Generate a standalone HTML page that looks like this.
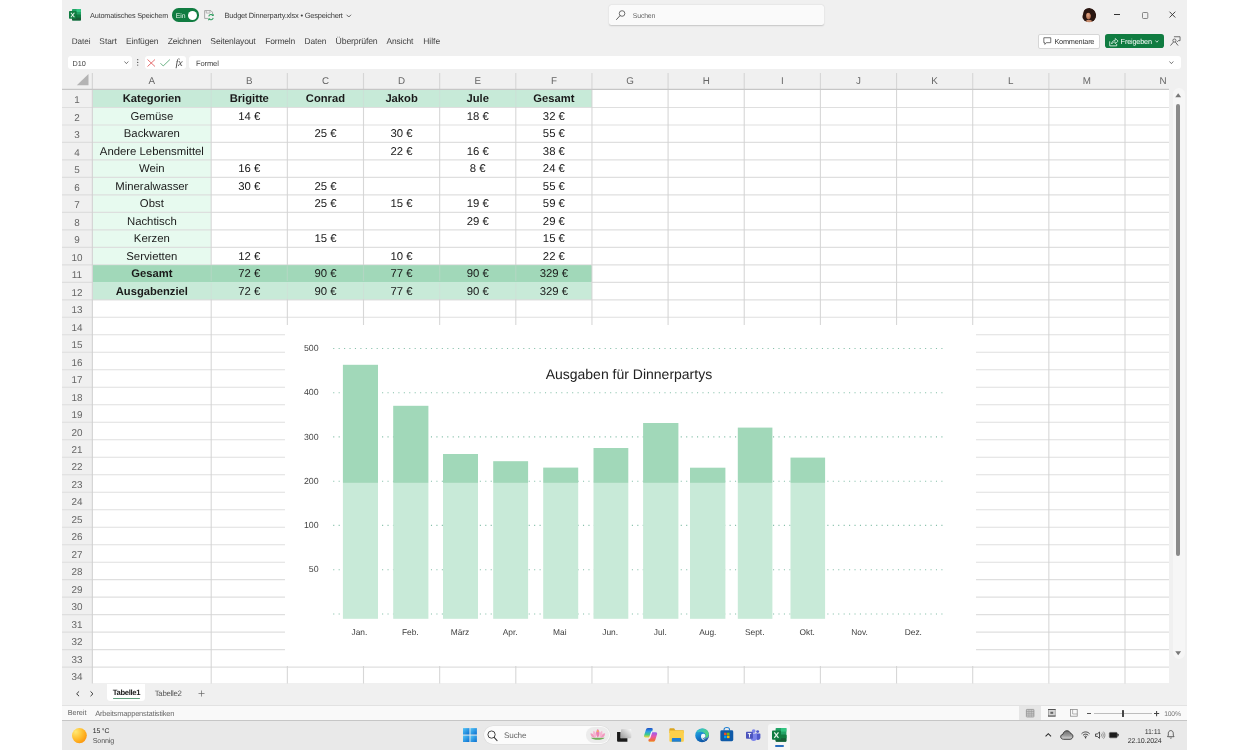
<!DOCTYPE html>
<html lang="de"><head><meta charset="utf-8"><title>Budget Dinnerparty.xlsx - Excel</title>
<style>
html,body{margin:0;padding:0}
body{text-rendering:geometricPrecision;-webkit-font-smoothing:antialiased;width:1250px;height:750px;position:relative;overflow:hidden;background:#fff;font-family:"Liberation Sans",sans-serif;}
.t{position:absolute;white-space:nowrap;overflow:visible}
.a{position:absolute}
svg{position:absolute;overflow:visible}
#r{position:absolute;left:0;top:0;width:1250px;height:750px;will-change:transform}
</style></head><body><div id="r">
<div class="a" style="left:62px;top:0;width:1125px;height:750px;background:#f0f0f0"></div>
<svg style="left:69px;top:9.1px" width="12" height="11.500" viewBox="0 0 24 23" preserveAspectRatio="none"><rect x="6" y="0" width="18" height="23" rx="1.400" fill="#21a366"/>
<rect x="15" y="0" width="9" height="6" fill="#33c481"/><rect x="6" y="5.800" width="9" height="5.800" fill="#107c41"/>
<rect x="6" y="11.500" width="18" height="11.500" rx="1.400" fill="#185c37"/><rect x="15" y="11.500" width="9" height="5.700" fill="#107c41"/>
<rect x="6" y="11.500" width="9" height="6" fill="#134f30"/>
<rect x="0" y="4.200" width="15" height="15.400" rx="1.400" fill="#107c41"/>
<path d="M3.800 7.400L10.800 16.400M10.800 7.400L3.800 16.400" stroke="#e4f4ea" stroke-width="2.100" fill="none"/></svg>
<div class="a" style="left:172px;top:8.4px;width:27px;height:13.200px;border-radius:6.600px;background:#107c41"></div>
<div class="a" style="left:188.3px;top:10.5px;width:9px;height:9px;border-radius:4.5px;background:#fff"></div>
<svg style="left:204.2px;top:9.6px" width="10" height="10.400" viewBox="0 0 20 21">
<path d="M1.200 1.200h12.500l3.300 3.300v12.500h-15.800z" fill="#f4f4f4" stroke="#8c8c8c" stroke-width="1.500"/>
<path d="M4.500 1.200v5h7.500v-5" fill="none" stroke="#9a9a9a" stroke-width="1.300"/>
<circle cx="14" cy="14.500" r="6.500" fill="#f0f0f0"/>
<path d="M9.500 13a4.800 4.800 0 0 1 8.600-1.800M18.500 16a4.800 4.800 0 0 1-8.600 1.800" fill="none" stroke="#2e9d5e" stroke-width="2.100"/>
<path d="M19.500 7.500v4.500h-4.500zM8.500 21.500v-4.500h4.500z" fill="#2e9d5e"/>
</svg>
<svg style="left:345.7px;top:13.6px" width="5.6" height="4" viewBox="0 0 11 8"><path d="M1 1.5L5.5 6 10 1.5" fill="none" stroke="#444" stroke-width="1.6"/></svg>
<div class="a" style="left:609px;top:5px;width:215.4px;height:20px;border-radius:2.5px;background:#fafafa;box-shadow:0 0.5px 1.5px rgba(0,0,0,.18)"></div>
<svg style="left:616.4px;top:10px" width="9.6" height="10" viewBox="0 0 19 20"><circle cx="12" cy="7" r="5.6" fill="none" stroke="#555" stroke-width="1.7"/><path d="M8 11.2L1 19" stroke="#555" stroke-width="1.9" stroke-linecap="round"/></svg>
<svg style="left:1081.8px;top:7.5px" width="14.4" height="14.4" viewBox="0 0 30 30">
<defs><clipPath id="av"><circle cx="15" cy="15" r="15"/></clipPath><radialGradient id="fc" cx="0.4" cy="0.4" r="0.7"><stop offset="0" stop-color="#e2a785"/><stop offset="1" stop-color="#a9674a"/></radialGradient></defs>
<g clip-path="url(#av)"><rect width="30" height="30" fill="#ebe4e0"/>
<path d="M8 1C16-2 27 2 29 12c1 7-1 13-6 17H5C1 25-1 20 2 14 3 8 4 3 8 1z" fill="#2a1712"/>
<path d="M9 26c2-2 8-2 11 0l2 4H7z" fill="#c58a6c"/>
<ellipse cx="13.500" cy="16" rx="5" ry="7.200" fill="url(#fc)"/>
<path d="M8 12c1-5 6-7 12-4 1 3 1 7 0 10-1-4-3-7-6-8-2 0-4 1-6 2z" fill="#2a1712"/></g></svg>
<div class="a" style="left:1113.8px;top:14px;width:5.8px;height:1px;background:#333"></div>
<svg style="left:1141.8px;top:11.5px" width="6.4" height="7" viewBox="0 0 6.4 7"><rect x="0.5" y="0.5" width="5.3" height="6" rx="0.9" fill="none" stroke="#6a6a6a" stroke-width="0.8"/></svg>
<svg style="left:1169.3px;top:11.4px" width="6.8" height="7.2" viewBox="0 0 14 14"><path d="M1 1L13 13M13 1L1 13" stroke="#2a2a2a" stroke-width="1.8"/></svg>
<div class="a" style="left:1038.2px;top:34.1px;width:59.6px;height:13px;border:0.8px solid #d6d6d6;border-radius:2px;background:#fff"></div>
<svg style="left:1043.4px;top:37.2px" width="8.6" height="8.4" viewBox="0 0 17 17"><path d="M1.5 1.5h14v10h-9l-3 3.5v-3.5h-2z" fill="none" stroke="#444" stroke-width="1.5" stroke-linejoin="round"/></svg>
<div class="a" style="left:1104.5px;top:33.9px;width:59px;height:14.500px;border-radius:2.800px;background:#107c41"></div>
<svg style="left:1108.7px;top:36.6px" width="9.6" height="9.6" viewBox="0 0 20 20"><path d="M1.500 9v9.500h14.500v-4" fill="none" stroke="#e8f6ee" stroke-width="1.700"/><path d="M5.500 14.500c0-4.500 3-7.500 7.500-7.500v-4l6 5.500-6 5.500v-3.800c-3.500 0-5.500 1-7.500 4.300z" fill="none" stroke="#e8f6ee" stroke-width="1.500" stroke-linejoin="round"/></svg>
<svg style="left:1154.6px;top:40px" width="3.8" height="3" viewBox="0 0 8 6"><path d="M1 1l3 3.5L7 1" fill="none" stroke="#fff" stroke-width="1.5"/></svg>
<svg style="left:1170px;top:35.8px" width="10.8" height="9.8" viewBox="0 0 22 20"><path d="M8 1.500h12.500v8h-3.500l-2.500 2.500" fill="none" stroke="#444" stroke-width="1.500" stroke-linejoin="round"/><circle cx="9" cy="9.300" r="3.200" fill="#f0f0f0" stroke="#444" stroke-width="1.500"/><path d="M1 19.500l6.300-7.500M16.500 19.500l-5.800-7.500" fill="none" stroke="#444" stroke-width="1.600"/></svg>
<div class="a" style="left:68.3px;top:55.7px;width:63.4px;height:13.700px;border-radius:3px;background:#fff"></div>
<svg style="left:124px;top:60.8px" width="4.8" height="3.4" viewBox="0 0 10 7"><path d="M1 1l4 4.5L9 1" fill="none" stroke="#444" stroke-width="1.5"/></svg>
<svg style="left:137.4px;top:59.4px" width="1.4" height="6.8" viewBox="0 0 2 10"><circle cx="1" cy="1" r="1" fill="#555"/><circle cx="1" cy="5" r="1" fill="#555"/><circle cx="1" cy="9" r="1" fill="#555"/></svg>
<div class="a" style="left:144.5px;top:55.7px;width:41.5px;height:13.700px;border-radius:3px;background:#fff"></div>
<svg style="left:147.2px;top:58.8px" width="8.5" height="8" viewBox="0 0 17 16"><path d="M1 1L16 15M16 1L1 15" stroke="#e0585a" stroke-width="1.7"/></svg>
<svg style="left:160px;top:59px" width="10.4" height="7.5" viewBox="0 0 21 15"><path d="M1 8.5L6.5 14 20 1" fill="none" stroke="#4ea36d" stroke-width="1.7"/></svg>
<div class="a" style="left:188.8px;top:55.7px;width:992.2px;height:13.700px;border-radius:3px;background:#fff"></div>
<svg style="left:1169.2px;top:60.8px" width="4.8" height="3.4" viewBox="0 0 10 7"><path d="M1 1l4 4.5L9 1" fill="none" stroke="#444" stroke-width="1.5"/></svg>
<div class="a" style="left:92.5px;top:89.95px;width:1076.5px;height:593.55px;background:#fff;overflow:hidden"></div>
<div class="a" style="left:92.50px;top:89.95px;width:499.45px;height:17.49px;background:#c7ead8"></div>
<div class="a" style="left:92.50px;top:107.44px;width:118.70px;height:157.41px;background:#e7faef"></div>
<div class="a" style="left:92.50px;top:264.85px;width:499.45px;height:17.49px;background:#a1d8b9"></div>
<div class="a" style="left:92.50px;top:282.34px;width:499.45px;height:17.49px;background:#c8ead8"></div>
<svg style="left:0;top:0" width="1250" height="750" viewBox="0 0 1250 750">
<g stroke="#dbdbdb" stroke-opacity="0.9" stroke-width="1.1" fill="none">
<path d="M62 107.44H1169"/>
<path d="M62 124.93H1169"/>
<path d="M62 142.42H1169"/>
<path d="M62 159.91H1169"/>
<path d="M62 177.40H1169"/>
<path d="M62 194.89H1169"/>
<path d="M62 212.38H1169"/>
<path d="M62 229.87H1169"/>
<path d="M62 247.36H1169"/>
<path d="M62 264.85H1169"/>
<path d="M62 282.34H1169"/>
<path d="M62 299.83H1169"/>
<path d="M62 317.32H1169"/>
<path d="M62 334.81H1169"/>
<path d="M62 352.30H1169"/>
<path d="M62 369.79H1169"/>
<path d="M62 387.28H1169"/>
<path d="M62 404.77H1169"/>
<path d="M62 422.26H1169"/>
<path d="M62 439.75H1169"/>
<path d="M62 457.24H1169"/>
<path d="M62 474.73H1169"/>
<path d="M62 492.22H1169"/>
<path d="M62 509.71H1169"/>
<path d="M62 527.20H1169"/>
<path d="M62 544.69H1169"/>
<path d="M62 562.18H1169"/>
<path d="M62 579.67H1169"/>
<path d="M62 597.16H1169"/>
<path d="M62 614.65H1169"/>
<path d="M62 632.14H1169"/>
<path d="M62 649.63H1169"/>
<path d="M62 667.12H1169"/>
<path d="M211.20 73V683.5" stroke="#d3d3d3"/>
<path d="M287.35 73V683.5" stroke="#d3d3d3"/>
<path d="M363.50 73V683.5" stroke="#d3d3d3"/>
<path d="M439.65 73V683.5" stroke="#d3d3d3"/>
<path d="M515.80 73V683.5" stroke="#d3d3d3"/>
<path d="M591.95 73V683.5" stroke="#d3d3d3"/>
<path d="M668.10 73V683.5" stroke="#d3d3d3"/>
<path d="M744.25 73V683.5" stroke="#d3d3d3"/>
<path d="M820.40 73V683.5" stroke="#d3d3d3"/>
<path d="M896.55 73V683.5" stroke="#d3d3d3"/>
<path d="M972.70 73V683.5" stroke="#d3d3d3"/>
<path d="M1048.85 73V683.5" stroke="#d3d3d3"/>
<path d="M1125.00 73V683.5" stroke="#d3d3d3"/>
</g>
<path d="M92.3 73V683.5" stroke="#d0d0d0" stroke-width="1" fill="none"/>
<path d="M62 89.4H1169" stroke="#c6c6c6" stroke-width="1.1" fill="none"/>
<path d="M76.8 85.2H88.5V74z" fill="#b4b4b4"/>
</svg>
<div class="a" style="left:93.10px;top:90.45px;width:498.35px;height:16.39px;background:#c7ead8;opacity:0.6"></div>
<div class="a" style="left:93.10px;top:265.45px;width:498.35px;height:16.89px;background:#a1d8b9;opacity:0.62"></div>
<div class="a" style="left:93.10px;top:282.34px;width:498.35px;height:16.89px;background:#c8ead8;opacity:0.62"></div>
<div class="a" style="left:93.10px;top:281.44px;width:498.35px;height:0.90px;background:#a1d8b9;opacity:0.9"></div>
<div class="a" style="left:93.10px;top:282.34px;width:498.35px;height:0.90px;background:#c8ead8;opacity:0.9"></div>
<div class="a" style="left:1169px;top:71px;width:18px;height:613.5px;background:#f0f0f0"></div>
<div class="a" style="left:1172.5px;top:88px;width:12px;height:571px;border-radius:6px;background:#f6f6f6"></div>
<div class="a" style="left:1176.2px;top:104px;width:4px;height:451.5px;border-radius:2px;background:#8a8a8a"></div>
<svg style="left:1175.4px;top:92.5px" width="6.4" height="4.6" viewBox="0 0 13 9"><path d="M6.5 0.5L12.5 8.5H0.5z" fill="#777"/></svg>
<svg style="left:1175.4px;top:651.4px" width="6.4" height="4.6" viewBox="0 0 13 9"><path d="M6.5 8.5L12.5 0.5H0.5z" fill="#777"/></svg>
<div class="a" style="left:284.6px;top:325.4px;width:691.4px;height:340.20000000000005px;background:#fff"></div>
<svg style="left:0;top:0" width="1250" height="750" viewBox="0 0 1250 750" font-family="Liberation Sans, sans-serif">
<path d="M333.2 348.5H942.6" stroke="#86c0aa" stroke-width="1.1" stroke-dasharray="1.1 4.33" fill="none"/>
<path d="M333.2 392.7H942.6" stroke="#86c0aa" stroke-width="1.1" stroke-dasharray="1.1 4.33" fill="none"/>
<path d="M333.2 436.9H942.6" stroke="#86c0aa" stroke-width="1.1" stroke-dasharray="1.1 4.33" fill="none"/>
<path d="M333.2 481.3H942.6" stroke="#86c0aa" stroke-width="1.1" stroke-dasharray="1.1 4.33" fill="none"/>
<path d="M333.2 525.4H942.6" stroke="#86c0aa" stroke-width="1.1" stroke-dasharray="1.1 4.33" fill="none"/>
<path d="M333.2 569.8H942.6" stroke="#86c0aa" stroke-width="1.1" stroke-dasharray="1.1 4.33" fill="none"/>
<path d="M333.2 614.0H942.6" stroke="#86c0aa" stroke-width="1.1" stroke-dasharray="1.1 4.33" fill="none"/>
<rect x="342.9" y="482.9" width="35.1" height="135.9" fill="#c8ead8"/>
<rect x="342.9" y="364.8" width="35.1" height="118.1" fill="#a1d8b9"/>
<rect x="393.2" y="482.9" width="35.2" height="135.9" fill="#c8ead8"/>
<rect x="393.2" y="405.8" width="35.2" height="77.1" fill="#a1d8b9"/>
<rect x="443.0" y="482.9" width="35.0" height="135.9" fill="#c8ead8"/>
<rect x="443.0" y="454.0" width="35.0" height="28.9" fill="#a1d8b9"/>
<rect x="493.2" y="482.9" width="34.9" height="135.9" fill="#c8ead8"/>
<rect x="493.2" y="461.2" width="34.9" height="21.7" fill="#a1d8b9"/>
<rect x="543.2" y="482.9" width="35.0" height="135.9" fill="#c8ead8"/>
<rect x="543.2" y="467.6" width="35.0" height="15.3" fill="#a1d8b9"/>
<rect x="593.5" y="482.9" width="34.8" height="135.9" fill="#c8ead8"/>
<rect x="593.5" y="448.0" width="34.8" height="34.9" fill="#a1d8b9"/>
<rect x="643.1" y="482.9" width="35.3" height="135.9" fill="#c8ead8"/>
<rect x="643.1" y="423.0" width="35.3" height="59.9" fill="#a1d8b9"/>
<rect x="690.0" y="482.9" width="35.4" height="135.9" fill="#c8ead8"/>
<rect x="690.0" y="467.7" width="35.4" height="15.2" fill="#a1d8b9"/>
<rect x="737.8" y="482.9" width="34.6" height="135.9" fill="#c8ead8"/>
<rect x="737.8" y="427.6" width="34.6" height="55.3" fill="#a1d8b9"/>
<rect x="790.5" y="482.9" width="34.6" height="135.9" fill="#c8ead8"/>
<rect x="790.5" y="457.6" width="34.6" height="25.3" fill="#a1d8b9"/>
<text x="318.6" y="351.1" font-size="8.8" fill="#444" text-anchor="end">500</text>
<text x="318.6" y="395.3" font-size="8.8" fill="#444" text-anchor="end">400</text>
<text x="318.6" y="439.5" font-size="8.8" fill="#444" text-anchor="end">300</text>
<text x="318.6" y="483.9" font-size="8.8" fill="#444" text-anchor="end">200</text>
<text x="318.6" y="528.0" font-size="8.8" fill="#444" text-anchor="end">100</text>
<text x="318.6" y="572.4" font-size="8.8" fill="#444" text-anchor="end">50</text>
<text x="359.4" y="635.2" font-size="8.4" fill="#3c3c3c" text-anchor="middle">Jan.</text>
<text x="410.3" y="635.2" font-size="8.4" fill="#3c3c3c" text-anchor="middle">Feb.</text>
<text x="460.0" y="635.2" font-size="8.4" fill="#3c3c3c" text-anchor="middle">März</text>
<text x="510.1" y="635.2" font-size="8.4" fill="#3c3c3c" text-anchor="middle">Apr.</text>
<text x="559.8" y="635.2" font-size="8.4" fill="#3c3c3c" text-anchor="middle">Mai</text>
<text x="610.2" y="635.2" font-size="8.4" fill="#3c3c3c" text-anchor="middle">Jun.</text>
<text x="660.3" y="635.2" font-size="8.4" fill="#3c3c3c" text-anchor="middle">Jul.</text>
<text x="707.8" y="635.2" font-size="8.4" fill="#3c3c3c" text-anchor="middle">Aug.</text>
<text x="754.7" y="635.2" font-size="8.4" fill="#3c3c3c" text-anchor="middle">Sept.</text>
<text x="807.2" y="635.2" font-size="8.4" fill="#3c3c3c" text-anchor="middle">Okt.</text>
<text x="859.6" y="635.2" font-size="8.4" fill="#3c3c3c" text-anchor="middle">Nov.</text>
<text x="913.3" y="635.2" font-size="8.4" fill="#3c3c3c" text-anchor="middle">Dez.</text>
<text x="628.9" y="378.8" font-size="14" fill="#222" text-anchor="middle">Ausgaben für Dinnerpartys</text>
</svg>
<div class="a" style="left:62px;top:683.5px;width:1125px;height:21.5px;background:#f0f0f0"></div>
<svg style="left:75.5px;top:690.9px" width="3.6" height="5.6" viewBox="0 0 7 11"><path d="M6 0.8L1.2 5.5 6 10.2" fill="none" stroke="#333" stroke-width="1.9"/></svg>
<svg style="left:90.4px;top:690.9px" width="3.6" height="5.6" viewBox="0 0 7 11"><path d="M1 0.8L5.8 5.5 1 10.2" fill="none" stroke="#333" stroke-width="1.9"/></svg>
<div class="a" style="left:107px;top:683.5px;width:38px;height:17.6px;border-radius:0 0 3.5px 3.5px;background:#fff"></div>
<div class="a" style="left:113px;top:697.5px;width:27px;height:1.8px;background:#5f9e7c;border-radius:1px"></div>
<svg style="left:197.5px;top:689.6px" width="7" height="7" viewBox="0 0 14 14"><path d="M7 1V13M1 7H13" stroke="#666" stroke-width="1.4"/></svg>
<div class="a" style="left:62px;top:704.8px;width:1125px;height:15.4px;background:#f9f9f9;border-top:1px solid #e2e2e2;box-sizing:border-box"></div>
<div class="a" style="left:1019px;top:706px;width:22px;height:14px;background:#e6e6e6"></div>
<svg style="left:1025.7px;top:708.6px" width="8.300" height="8.400" viewBox="0 0 16 16"><rect x="0.700" y="0.700" width="14.600" height="14.600" rx="1" fill="#d4d4d4" stroke="#8a8a8a" stroke-width="1.400"/><path d="M0.700 4.400H15.300M0.700 8H15.300M0.700 11.600H15.300" stroke="#8a8a8a" stroke-width="1.300"/><path d="M5.600 0.700V15.300M10.400 0.700V15.300" stroke="#9a9a9a" stroke-width="1"/></svg>
<svg style="left:1048.2px;top:708.8px" width="7.6" height="7.6" viewBox="0 0 16 16"><rect x="0.800" y="0.800" width="14.400" height="14.400" fill="#d6d6d6" stroke="#8a8a8a" stroke-width="1.400"/><path d="M0 1.200H16M0 14.800H16" stroke="#555" stroke-width="2.200"/><rect x="5" y="5.800" width="6" height="4.400" fill="#666"/></svg>
<svg style="left:1070.2px;top:708.8px" width="7.6" height="7.6" viewBox="0 0 16 16"><rect x="0.8" y="0.8" width="14.4" height="14.4" fill="none" stroke="#888" stroke-width="1.6"/><path d="M5.5 0.8V10.5H15.2" fill="none" stroke="#888" stroke-width="1.3"/></svg>
<div class="a" style="left:1086.8px;top:712.9px;width:4.400px;height:1.400px;background:#555"></div>
<div class="a" style="left:1093.5px;top:713px;width:58.3px;height:0.9px;background:#bdbdbd"></div>
<div class="a" style="left:1121.6px;top:709.8px;width:2.4px;height:7.2px;background:#444;border-radius:0.6px"></div>
<svg style="left:1154px;top:710.8px" width="5.2" height="5.2" viewBox="0 0 10 10"><path d="M5 0V10M0 5H10" stroke="#444" stroke-width="2"/></svg>
<div class="a" style="left:62px;top:719.9px;width:1125px;height:30.1px;background:#e9e9e9;border-top:1px solid #c6c6c6;box-sizing:border-box"></div>
<svg style="left:72px;top:727.8px" width="14.8" height="15.2" viewBox="0 0 30 30" preserveAspectRatio="none"><defs><radialGradient id="sun" cx="0.25" cy="0.25" r="0.95"><stop offset="0" stop-color="#ffe873"/><stop offset="0.5" stop-color="#ffbe2e"/><stop offset="1" stop-color="#fb8c04"/></radialGradient></defs><circle cx="15" cy="15" r="15" fill="url(#sun)"/></svg>
<svg style="left:462.5px;top:728.1px" width="13.9" height="14.1" viewBox="0 0 28 28"><defs><linearGradient id="wg" x1="0" y1="0" x2="1" y2="1"><stop offset="0" stop-color="#54c5f8"/><stop offset="1" stop-color="#0a6fd0"/></linearGradient></defs>
<rect x="0" y="0" width="13" height="13" fill="url(#wg)"/><rect x="15" y="0" width="13" height="13" fill="url(#wg)"/><rect x="0" y="15" width="13" height="13" fill="url(#wg)"/><rect x="15" y="15" width="13" height="13" fill="url(#wg)"/></svg>
<div class="a" style="left:483.6px;top:726.2px;width:126.4px;height:18px;border-radius:9px;background:#fbfbfb;box-shadow:0 0 0 0.6px #dcdcdc"></div>
<svg style="left:486.8px;top:730px" width="10.6" height="11.2" viewBox="0 0 21 22"><circle cx="9" cy="9" r="7.2" fill="none" stroke="#333" stroke-width="1.8"/><path d="M14.2 14.6L20 21" stroke="#333" stroke-width="2" stroke-linecap="round"/></svg>
<div class="a" style="left:585.7px;top:727.4px;width:23.4px;height:15.6px;border-radius:7.8px;background:#ececec"></div>
<svg style="left:590px;top:729.2px" width="15.6" height="10.8" viewBox="0 0 31 21">
<path d="M2 17h27c-2 3-8 4-13.5 4S4 20 2 17z" fill="#6fae5a"/>
<path d="M1 8c4 0 8 3 9 9-5 0-9-3-9-9z" fill="#f29ac0"/><path d="M30 8c-4 0-8 3-9 9 5 0 9-3 9-9z" fill="#f29ac0"/>
<path d="M7 3c4 2 6 7 5 14-5-2-7-8-5-14z" fill="#f7b3d0"/><path d="M24 3c-4 2-6 7-5 14 5-2 7-8 5-14z" fill="#f7b3d0"/>
<path d="M15.5 0c4 4 5 11 0 17-5-6-4-13 0-17z" fill="#ee7fb0"/><circle cx="15.5" cy="4" r="1.6" fill="#f9c440"/></svg>
<svg style="left:617.2px;top:728.6px" width="14.4" height="12.8" viewBox="0 0 29 26"><defs><linearGradient id="tv" x1="0" y1="1" x2="1" y2="0"><stop offset="0" stop-color="#9a9a9a"/><stop offset="1" stop-color="#fdfdfd"/></linearGradient></defs>
<rect x="8" y="0" width="21" height="19" rx="2" fill="url(#tv)"/><path d="M0 6h7v13h14v7H2a2 2 0 0 1-2-2z" fill="#1b1b1b"/></svg>
<svg style="left:643.6px;top:727.8px" width="13.2" height="13.8" viewBox="0 0 26 27"><defs>
<linearGradient id="cp1" x1="0" y1="0" x2="0" y2="1"><stop offset="0" stop-color="#1a4fc4"/><stop offset="0.35" stop-color="#2e9ce8"/><stop offset="0.68" stop-color="#3cc98e"/><stop offset="1" stop-color="#efd93a"/></linearGradient>
<linearGradient id="cp2" x1="0" y1="1" x2="0" y2="0"><stop offset="0" stop-color="#9a5cf0"/><stop offset="0.45" stop-color="#e957a8"/><stop offset="0.85" stop-color="#f26b3a"/><stop offset="1" stop-color="#eaa030"/></linearGradient></defs>
<path id="cpl" d="M7.500 0h7c2.200 0 3.300 1.400 2.600 3.500l-3.600 11.500c-.7 2.200-2.200 3.500-4.500 3.500H3c-2.300 0-3.500-1.600-2.800-3.800l3.400-10.700C4.300 1.400 5.500 0 7.500 0z" fill="url(#cp1)"/>
<path d="M7.500 0h7c2.200 0 3.300 1.400 2.600 3.500l-3.600 11.500c-.7 2.200-2.200 3.500-4.500 3.500H3c-2.300 0-3.500-1.600-2.800-3.800l3.400-10.700C4.300 1.400 5.500 0 7.500 0z" fill="url(#cp2)" transform="rotate(180 13 13.500)"/>
<path d="M15.200 7.500l-4.200 12.500" stroke="#fff" stroke-opacity="0.92" stroke-width="2.400" stroke-linecap="round"/></svg>
<svg style="left:668.7px;top:728px" width="15.2" height="14" viewBox="0 0 30 28"><path d="M0.500 3C0.500 1.500 1.500 0.500 3 0.500h7l2.500 4h15c1.500 0 2 .8 2 2V10H0.500z" fill="#dba520"/>
<rect x="0.500" y="5" width="29" height="22.500" rx="1.800" fill="#fcd04a"/><path d="M5.500 27.500v-5.500c0-1.200.8-2 2-2h14.500c1.200 0 2 .8 2 2v5.500z" fill="#1f7fd4"/></svg>
<svg style="left:694.9px;top:727.5px" width="14.2" height="14.8" viewBox="0 0 29 30"><defs>
<linearGradient id="eg" x1="0.1" y1="0" x2="0.6" y2="1"><stop offset="0" stop-color="#2fb9d6"/><stop offset="0.5" stop-color="#1582d2"/><stop offset="1" stop-color="#0b4f9e"/></linearGradient>
<linearGradient id="eg2" x1="0" y1="0" x2="1" y2="0.6"><stop offset="0" stop-color="#2fb9d6"/><stop offset="1" stop-color="#54d67a"/></linearGradient></defs>
<circle cx="14.500" cy="15" r="14" fill="url(#eg)"/>
<path d="M4 7C8 1 17-1 23 3c5 3.500 7 10 3.500 15-1.500 2-4.500 3-7.500 2 3-1 4-4 2.500-7C19 9 14 7 9 8 7 8.300 5 9 4 7z" fill="url(#eg2)"/>
<path d="M13 13c2.500-2 6.500-1.500 8 1 1.500 3-.5 5.500-3.500 6 4 1.500 7.500.5 9.500-2-1 5-6 8-10 6.500-4-1.500-6-7-4-11.500z" fill="#f3f8fc"/>
<path d="M27 18c-3 4-9 4.500-12 1.500 1 4 5 6.500 9 5 2-1.500 3-4 3-6.500z" fill="#0b4f9e" fill-opacity="0.85"/></svg>
<svg style="left:720.4px;top:727px" width="13.6" height="14.4" viewBox="0 0 27 29"><path d="M8 7V5c0-2 1.500-4 5.500-4S19 3 19 5v2" fill="none" stroke="#1f7fd1" stroke-width="2.200"/>
<rect x="0.500" y="6.500" width="26" height="22" rx="3" fill="#0f5aa8"/>
<rect x="8" y="11.500" width="5" height="5" fill="#f25022"/><rect x="14" y="11.500" width="5" height="5" fill="#7fba00"/><rect x="8" y="17.500" width="5" height="5" fill="#00a4ef"/><rect x="14" y="17.500" width="5" height="5" fill="#ffb900"/></svg>
<svg style="left:746px;top:728.6px" width="14.4" height="12.2" viewBox="0 0 29 24"><circle cx="23.500" cy="5" r="3" fill="#5059c9"/><circle cx="15.500" cy="3.800" r="3.800" fill="#7b83eb"/>
<path d="M20 9h8c.6 0 1 .4 1 1v7c0 3-2 5-5 5s-4-2-4-5z" fill="#5059c9"/><path d="M9 9h13v9c0 4-3 6-6.500 6S9 22 9 18z" fill="#7b83eb"/>
<rect x="0" y="5.500" width="14" height="14" rx="1.500" fill="#4b53bc"/><path d="M3.500 9h7M7 9v8" stroke="#fff" stroke-width="1.900" fill="none"/></svg>
<div class="a" style="left:768px;top:724px;width:22.2px;height:26px;border-radius:3px 3px 0 0;background:#f6f6f6"></div>
<svg style="left:772px;top:727.8px" width="14.400" height="13.700" viewBox="0 0 24 23" preserveAspectRatio="none"><rect x="6" y="0" width="18" height="23" rx="1.400" fill="#21a366"/>
<rect x="15" y="0" width="9" height="6" fill="#33c481"/><rect x="6" y="5.800" width="9" height="5.800" fill="#107c41"/>
<rect x="6" y="11.500" width="18" height="11.500" rx="1.400" fill="#185c37"/><rect x="15" y="11.500" width="9" height="5.700" fill="#107c41"/>
<rect x="6" y="11.500" width="9" height="6" fill="#134f30"/>
<rect x="0" y="4.200" width="15" height="15.400" rx="1.400" fill="#107c41"/>
<path d="M3.800 7.400L10.800 16.400M10.800 7.400L3.800 16.400" stroke="#e4f4ea" stroke-width="2.100" fill="none"/></svg>
<div class="a" style="left:774.7px;top:745px;width:9.2px;height:1.8px;border-radius:1px;background:#2a6fc0"></div>
<svg style="left:1045px;top:733.1px" width="6.600" height="3.800" viewBox="0 0 14 8"><path d="M1.200 7L7 1.400 12.800 7" fill="none" stroke="#2a2a2a" stroke-width="2.300"/></svg>
<svg style="left:1060.2px;top:730px" width="13.600" height="10" viewBox="0 0 27 20"><defs><linearGradient id="cl" x1="0" y1="0" x2="0" y2="1"><stop offset="0" stop-color="#6e6e6e"/><stop offset="0.55" stop-color="#9a9a9a"/><stop offset="1" stop-color="#dcdcdc"/></linearGradient></defs>
<path d="M7 18.500C3.500 18.500 1.300 16.300 1.300 13.500c0-2.700 2-4.700 4.600-4.900C6.600 4.500 9.700 1.500 13.700 1.500c3.600 0 6.500 2.300 7.400 5.600 2.700.4 4.600 2.600 4.600 5.400 0 3.300-2.500 6-5.700 6z" fill="url(#cl)" stroke="#3a3a3a" stroke-width="2" stroke-linejoin="round"/></svg>
<svg style="left:1081.3px;top:730.8px" width="9.200" height="7.600" viewBox="0 0 18 15"><path d="M1 5.500C5.500 .6 12.500 .6 17 5.500M3.800 8.500C6.800 5.400 11.200 5.400 14.200 8.500M6.500 11.300c1.500-1.500 3.500-1.500 5 0" fill="none" stroke="#3a3a3a" stroke-width="1.900"/><circle cx="9" cy="13.300" r="1.400" fill="#2a2a2a"/></svg>
<svg style="left:1095px;top:730.8px" width="10" height="8.400" viewBox="0 0 20 17"><path d="M1 6h3.500L9 2v13L4.500 11H1z" fill="none" stroke="#333" stroke-width="1.700" stroke-linejoin="round"/><path d="M12 5.500c1.500 1.500 1.500 4.500 0 6M14.500 3.300c2.800 2.800 2.800 7.600 0 10.400M17 1.300c4 4 4 10.400 0 14.400" fill="none" stroke="#777" stroke-width="1.500"/></svg>
<svg style="left:1109.4px;top:732px" width="9.600" height="6.200" viewBox="0 0 19 12"><rect x="0.700" y="0.700" width="15.600" height="10.600" rx="2" fill="#1c1c1c" stroke="#555" stroke-width="1.400"/><rect x="17" y="3.500" width="2" height="5" rx="0.800" fill="#222"/></svg>
<svg style="left:1166.7px;top:730.3px" width="7.600" height="9.400" viewBox="0 0 15 19"><path d="M7.500 1.200c3 0 5 2.300 5 5.300v4l1.600 3H0.900l1.600-3v-4c0-3 2-5.300 5-5.300z" fill="none" stroke="#333" stroke-width="1.500" stroke-linejoin="round"/><path d="M5.500 15.500c.4 1.300 3.600 1.300 4 0" fill="none" stroke="#333" stroke-width="1.400"/></svg>
<svg style="left:0;top:0" width="1250" height="750" viewBox="0 0 1250 750" font-family="Liberation Sans, sans-serif">
<text x="90.11" y="18.07" font-size="7.32" fill="#3d3d3d" textLength="78.33" lengthAdjust="spacing" >Automatisches Speichern</text>
<text x="175.73" y="17.69" font-size="6.82" fill="#e6f6ec" textLength="9.88" lengthAdjust="spacing" >Ein</text>
<text x="224.50" y="18.13" font-size="7.48" fill="#3d3d3d" textLength="118.45" lengthAdjust="spacing" >Budget Dinnerparty.xlsx • Gespeichert</text>
<text x="632.72" y="18.03" font-size="6.94" fill="#666" textLength="22.69" lengthAdjust="spacing" >Suchen</text>
<text x="71.67" y="44.23" font-size="8.17" fill="#444" textLength="18.82" lengthAdjust="spacing" >Datei</text>
<text x="99.37" y="44.29" font-size="8.33" fill="#444" textLength="17.43" lengthAdjust="spacing" >Start</text>
<text x="126.06" y="44.34" font-size="8.48" fill="#444" textLength="32.45" lengthAdjust="spacing" >Einfügen</text>
<text x="167.66" y="44.35" font-size="8.5" fill="#444" textLength="33.85" lengthAdjust="spacing" >Zeichnen</text>
<text x="210.36" y="44.37" font-size="8.56" fill="#444" textLength="45.36" lengthAdjust="spacing" >Seitenlayout</text>
<text x="265.16" y="44.34" font-size="8.47" fill="#444" textLength="30.15" lengthAdjust="spacing" >Formeln</text>
<text x="304.56" y="44.30" font-size="8.38" fill="#444" textLength="21.94" lengthAdjust="spacing" >Daten</text>
<text x="335.55" y="44.44" font-size="8.75" fill="#444" textLength="42.18" lengthAdjust="spacing" >Überprüfen</text>
<text x="386.46" y="44.33" font-size="8.44" fill="#444" textLength="26.94" lengthAdjust="spacing" >Ansicht</text>
<text x="423.26" y="44.34" font-size="8.48" fill="#444" textLength="16.85" lengthAdjust="spacing" >Hilfe</text>
<text x="1054.41" y="44.28" font-size="7.34" fill="#333" textLength="40.03" lengthAdjust="spacing" >Kommentare</text>
<text x="1120.61" y="44.06" font-size="7.3" fill="#fff" textLength="31.43" lengthAdjust="spacing" >Freigeben</text>
<text x="72.51" y="65.56" font-size="7.29" fill="#444" textLength="13.23" lengthAdjust="spacing" >D10</text>
<text x="175.6" y="65.6" font-size="10.5" font-family="Liberation Serif, serif" font-style="italic" fill="#444" letter-spacing="-0.5">fx</text>
<text x="196.00" y="65.67" font-size="7.6" fill="#444" textLength="22.86" lengthAdjust="spacing" >Formel</text>
<text x="151.85" y="84.37" font-size="9.8" fill="#666" text-anchor="middle" >A</text>
<text x="249.28" y="84.37" font-size="9.8" fill="#666" text-anchor="middle" >B</text>
<text x="325.43" y="84.37" font-size="9.8" fill="#666" text-anchor="middle" >C</text>
<text x="401.57" y="84.37" font-size="9.8" fill="#666" text-anchor="middle" >D</text>
<text x="477.72" y="84.37" font-size="9.8" fill="#666" text-anchor="middle" >E</text>
<text x="553.88" y="84.37" font-size="9.8" fill="#666" text-anchor="middle" >F</text>
<text x="630.03" y="84.37" font-size="9.8" fill="#666" text-anchor="middle" >G</text>
<text x="706.17" y="84.37" font-size="9.8" fill="#666" text-anchor="middle" >H</text>
<text x="782.33" y="84.37" font-size="9.8" fill="#666" text-anchor="middle" >I</text>
<text x="858.48" y="84.37" font-size="9.8" fill="#666" text-anchor="middle" >J</text>
<text x="934.62" y="84.37" font-size="9.8" fill="#666" text-anchor="middle" >K</text>
<text x="1010.78" y="84.37" font-size="9.8" fill="#666" text-anchor="middle" >L</text>
<text x="1086.93" y="84.37" font-size="9.8" fill="#666" text-anchor="middle" >M</text>
<text x="1163.08" y="84.37" font-size="9.8" fill="#666" text-anchor="middle" >N</text>
<text x="76.90" y="103.20" font-size="9.9" fill="#666" text-anchor="middle" >1</text>
<text x="76.90" y="120.69" font-size="9.9" fill="#666" text-anchor="middle" >2</text>
<text x="76.90" y="138.18" font-size="9.9" fill="#666" text-anchor="middle" >3</text>
<text x="76.90" y="155.67" font-size="9.9" fill="#666" text-anchor="middle" >4</text>
<text x="76.90" y="173.16" font-size="9.9" fill="#666" text-anchor="middle" >5</text>
<text x="76.90" y="190.65" font-size="9.9" fill="#666" text-anchor="middle" >6</text>
<text x="76.90" y="208.14" font-size="9.9" fill="#666" text-anchor="middle" >7</text>
<text x="76.90" y="225.63" font-size="9.9" fill="#666" text-anchor="middle" >8</text>
<text x="76.90" y="243.12" font-size="9.9" fill="#666" text-anchor="middle" >9</text>
<text x="76.90" y="260.61" font-size="9.9" fill="#666" text-anchor="middle" >10</text>
<text x="76.90" y="278.10" font-size="9.9" fill="#666" text-anchor="middle" >11</text>
<text x="76.90" y="295.59" font-size="9.9" fill="#666" text-anchor="middle" >12</text>
<text x="76.90" y="313.08" font-size="9.9" fill="#666" text-anchor="middle" >13</text>
<text x="76.90" y="330.57" font-size="9.9" fill="#666" text-anchor="middle" >14</text>
<text x="76.90" y="348.06" font-size="9.9" fill="#666" text-anchor="middle" >15</text>
<text x="76.90" y="365.55" font-size="9.9" fill="#666" text-anchor="middle" >16</text>
<text x="76.90" y="383.04" font-size="9.9" fill="#666" text-anchor="middle" >17</text>
<text x="76.90" y="400.53" font-size="9.9" fill="#666" text-anchor="middle" >18</text>
<text x="76.90" y="418.02" font-size="9.9" fill="#666" text-anchor="middle" >19</text>
<text x="76.90" y="435.51" font-size="9.9" fill="#666" text-anchor="middle" >20</text>
<text x="76.90" y="453.00" font-size="9.9" fill="#666" text-anchor="middle" >21</text>
<text x="76.90" y="470.49" font-size="9.9" fill="#666" text-anchor="middle" >22</text>
<text x="76.90" y="487.98" font-size="9.9" fill="#666" text-anchor="middle" >23</text>
<text x="76.90" y="505.47" font-size="9.9" fill="#666" text-anchor="middle" >24</text>
<text x="76.90" y="522.96" font-size="9.9" fill="#666" text-anchor="middle" >25</text>
<text x="76.90" y="540.45" font-size="9.9" fill="#666" text-anchor="middle" >26</text>
<text x="76.90" y="557.94" font-size="9.9" fill="#666" text-anchor="middle" >27</text>
<text x="76.90" y="575.43" font-size="9.9" fill="#666" text-anchor="middle" >28</text>
<text x="76.90" y="592.92" font-size="9.9" fill="#666" text-anchor="middle" >29</text>
<text x="76.90" y="610.41" font-size="9.9" fill="#666" text-anchor="middle" >30</text>
<text x="76.90" y="627.90" font-size="9.9" fill="#666" text-anchor="middle" >31</text>
<text x="76.90" y="645.39" font-size="9.9" fill="#666" text-anchor="middle" >32</text>
<text x="76.90" y="662.88" font-size="9.9" fill="#666" text-anchor="middle" >33</text>
<text x="76.90" y="680.37" font-size="9.9" fill="#666" text-anchor="middle" >34</text>
<text x="151.85" y="102.18" font-size="11.2" fill="#1a1a1a" text-anchor="middle" font-weight="700" >Kategorien</text>
<text x="249.28" y="102.18" font-size="11.2" fill="#1a1a1a" text-anchor="middle" font-weight="700" >Brigitte</text>
<text x="325.43" y="102.18" font-size="11.2" fill="#1a1a1a" text-anchor="middle" font-weight="700" >Conrad</text>
<text x="401.57" y="102.18" font-size="11.2" fill="#1a1a1a" text-anchor="middle" font-weight="700" >Jakob</text>
<text x="477.72" y="102.18" font-size="11.2" fill="#1a1a1a" text-anchor="middle" font-weight="700" >Jule</text>
<text x="553.88" y="102.18" font-size="11.2" fill="#1a1a1a" text-anchor="middle" font-weight="700" >Gesamt</text>
<text x="151.85" y="119.72" font-size="11.35" fill="#1a1a1a" text-anchor="middle" >Gemüse</text>
<text x="249.28" y="119.72" font-size="11.35" fill="#1a1a1a" text-anchor="middle" >14 €</text>
<text x="477.72" y="119.72" font-size="11.35" fill="#1a1a1a" text-anchor="middle" >18 €</text>
<text x="553.88" y="119.72" font-size="11.35" fill="#1a1a1a" text-anchor="middle" >32 €</text>
<text x="151.85" y="137.21" font-size="11.35" fill="#1a1a1a" text-anchor="middle" >Backwaren</text>
<text x="325.43" y="137.21" font-size="11.35" fill="#1a1a1a" text-anchor="middle" >25 €</text>
<text x="401.57" y="137.21" font-size="11.35" fill="#1a1a1a" text-anchor="middle" >30 €</text>
<text x="553.88" y="137.21" font-size="11.35" fill="#1a1a1a" text-anchor="middle" >55 €</text>
<text x="151.85" y="154.70" font-size="11.35" fill="#1a1a1a" text-anchor="middle" >Andere Lebensmittel</text>
<text x="401.57" y="154.70" font-size="11.35" fill="#1a1a1a" text-anchor="middle" >22 €</text>
<text x="477.72" y="154.70" font-size="11.35" fill="#1a1a1a" text-anchor="middle" >16 €</text>
<text x="553.88" y="154.70" font-size="11.35" fill="#1a1a1a" text-anchor="middle" >38 €</text>
<text x="151.85" y="172.19" font-size="11.35" fill="#1a1a1a" text-anchor="middle" >Wein</text>
<text x="249.28" y="172.19" font-size="11.35" fill="#1a1a1a" text-anchor="middle" >16 €</text>
<text x="477.72" y="172.19" font-size="11.35" fill="#1a1a1a" text-anchor="middle" >8 €</text>
<text x="553.88" y="172.19" font-size="11.35" fill="#1a1a1a" text-anchor="middle" >24 €</text>
<text x="151.85" y="189.68" font-size="11.35" fill="#1a1a1a" text-anchor="middle" >Mineralwasser</text>
<text x="249.28" y="189.68" font-size="11.35" fill="#1a1a1a" text-anchor="middle" >30 €</text>
<text x="325.43" y="189.68" font-size="11.35" fill="#1a1a1a" text-anchor="middle" >25 €</text>
<text x="553.88" y="189.68" font-size="11.35" fill="#1a1a1a" text-anchor="middle" >55 €</text>
<text x="151.85" y="207.17" font-size="11.35" fill="#1a1a1a" text-anchor="middle" >Obst</text>
<text x="325.43" y="207.17" font-size="11.35" fill="#1a1a1a" text-anchor="middle" >25 €</text>
<text x="401.57" y="207.17" font-size="11.35" fill="#1a1a1a" text-anchor="middle" >15 €</text>
<text x="477.72" y="207.17" font-size="11.35" fill="#1a1a1a" text-anchor="middle" >19 €</text>
<text x="553.88" y="207.17" font-size="11.35" fill="#1a1a1a" text-anchor="middle" >59 €</text>
<text x="151.85" y="224.66" font-size="11.35" fill="#1a1a1a" text-anchor="middle" >Nachtisch</text>
<text x="477.72" y="224.66" font-size="11.35" fill="#1a1a1a" text-anchor="middle" >29 €</text>
<text x="553.88" y="224.66" font-size="11.35" fill="#1a1a1a" text-anchor="middle" >29 €</text>
<text x="151.85" y="242.15" font-size="11.35" fill="#1a1a1a" text-anchor="middle" >Kerzen</text>
<text x="325.43" y="242.15" font-size="11.35" fill="#1a1a1a" text-anchor="middle" >15 €</text>
<text x="553.88" y="242.15" font-size="11.35" fill="#1a1a1a" text-anchor="middle" >15 €</text>
<text x="151.85" y="259.64" font-size="11.35" fill="#1a1a1a" text-anchor="middle" >Servietten</text>
<text x="249.28" y="259.64" font-size="11.35" fill="#1a1a1a" text-anchor="middle" >12 €</text>
<text x="401.57" y="259.64" font-size="11.35" fill="#1a1a1a" text-anchor="middle" >10 €</text>
<text x="553.88" y="259.64" font-size="11.35" fill="#1a1a1a" text-anchor="middle" >22 €</text>
<text x="151.85" y="277.08" font-size="11.2" fill="#1a1a1a" text-anchor="middle" font-weight="700" >Gesamt</text>
<text x="249.28" y="277.13" font-size="11.35" fill="#1a1a1a" text-anchor="middle" >72 €</text>
<text x="325.43" y="277.13" font-size="11.35" fill="#1a1a1a" text-anchor="middle" >90 €</text>
<text x="401.57" y="277.13" font-size="11.35" fill="#1a1a1a" text-anchor="middle" >77 €</text>
<text x="477.72" y="277.13" font-size="11.35" fill="#1a1a1a" text-anchor="middle" >90 €</text>
<text x="553.88" y="277.13" font-size="11.35" fill="#1a1a1a" text-anchor="middle" >329 €</text>
<text x="151.85" y="294.57" font-size="11.2" fill="#1a1a1a" text-anchor="middle" font-weight="700" >Ausgabenziel</text>
<text x="249.28" y="294.62" font-size="11.35" fill="#1a1a1a" text-anchor="middle" >72 €</text>
<text x="325.43" y="294.62" font-size="11.35" fill="#1a1a1a" text-anchor="middle" >90 €</text>
<text x="401.57" y="294.62" font-size="11.35" fill="#1a1a1a" text-anchor="middle" >77 €</text>
<text x="477.72" y="294.62" font-size="11.35" fill="#1a1a1a" text-anchor="middle" >90 €</text>
<text x="553.88" y="294.62" font-size="11.35" fill="#1a1a1a" text-anchor="middle" >329 €</text>
<text x="112.69" y="694.80" font-size="7.69" fill="#222" font-weight="700" textLength="27.77" lengthAdjust="spacing" >Tabelle1</text>
<text x="154.69" y="695.55" font-size="7.82" fill="#555" textLength="27.28" lengthAdjust="spacing" >Tabelle2</text>
<text x="67.71" y="715.49" font-size="7.37" fill="#6a6a6a" textLength="18.74" lengthAdjust="spacing" >Bereit</text>
<text x="95.20" y="715.54" font-size="7.52" fill="#6a6a6a" textLength="79.25" lengthAdjust="spacing" >Arbeitsmappenstatistiken</text>
<text x="1164.13" y="715.67" font-size="6.77" fill="#777" textLength="16.88" lengthAdjust="spacing" >100%</text>
<text x="92.73" y="732.99" font-size="6.82" fill="#222" textLength="16.68" lengthAdjust="spacing" >15 °C</text>
<text x="92.71" y="743.21" font-size="7.15" fill="#555" textLength="21.51" lengthAdjust="spacing" >Sonnig</text>
<text x="504.07" y="738.37" font-size="8.15" fill="#666" textLength="22.42" lengthAdjust="spacing" >Suche</text>
<text x="1144.72" y="734.07" font-size="7.04" fill="#333" textLength="16.20" lengthAdjust="spacing" >11:11</text>
<text x="1127.72" y="742.98" font-size="7.09" fill="#333" textLength="33.91" lengthAdjust="spacing" >22.10.2024</text>
</svg>
</div></body></html>
